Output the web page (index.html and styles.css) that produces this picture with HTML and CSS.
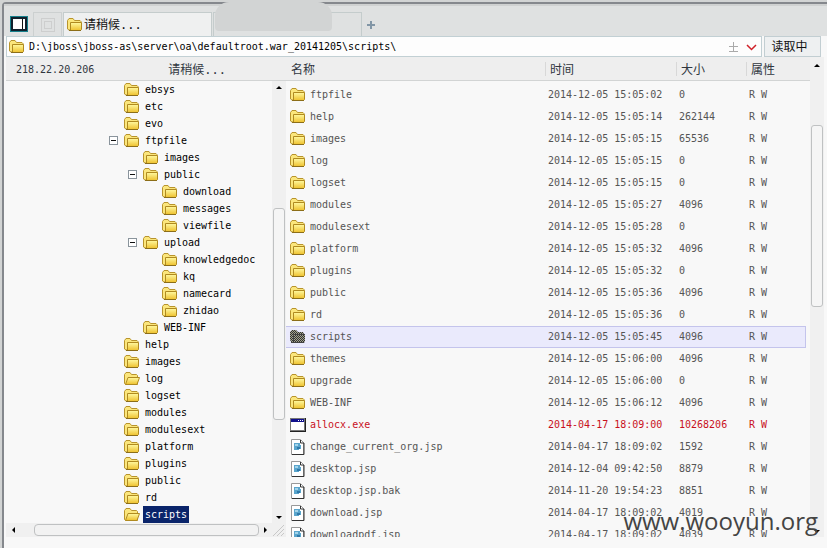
FILE: index.html
```
<!DOCTYPE html>
<html lang="zh-CN">
<head>
<meta charset="utf-8">
<title>文件管理</title>
<link rel="stylesheet" href="styles.css">
</head>
<body>
<svg class="defs" aria-hidden="true">
  <defs>
    <linearGradient id="gold" x1="0" y1="0" x2="0" y2="1"><stop offset="0" stop-color="#fff9a0"/><stop offset="1" stop-color="#eec02c"/></linearGradient>
    <pattern id="dots" width="2" height="2" patternUnits="userSpaceOnUse"><rect width="2" height="2" fill="#a3a38c"/><rect width="1" height="1" fill="#333"/><rect x="1" y="1" width="1" height="1" fill="#333"/></pattern>
    <symbol id="folder" viewBox="0 0 16 14">
      <path d="M.5 11V2.500l1.500-2h4l1.500 2h5.500l1 1V11l-1 1H2z" fill="#fbe67c" stroke="#b8942c"/>
      <path d="M3.500 4.500h11v7l-1 1H3.500z" fill="url(#gold)" stroke="#b08a20"/>
      <path d="M2 12.500h12" stroke="#8c6e18"/>
    </symbol>
    <symbol id="folder-open" viewBox="0 0 16 14">
      <path d="M.5 11.500v-9L2 .5h4l1.500 2h5l1 1v9H1.500z" fill="#fbe67c" stroke="#b8942c"/>
      <path d="M1.500 12.500l2.500-7h11.500l-2.500 7z" fill="url(#gold)" stroke="#b08a20"/>
    </symbol>
    <symbol id="folder-dark" viewBox="0 0 16 14">
      <path d="M0 10V2l2-2h4l2 2h5l1 2h1v7l-1 2H2z" fill="url(#dots)"/>
      <path d="M3.500 11V4.500H15M1 12.500h13" fill="none" stroke="#444"/>
    </symbol>
    <symbol id="exe" viewBox="0 0 16 14">
      <path d="M0 0h16v14H0z" fill="#222"/><path d="M0 0h15v13H0z" fill="#777"/><path d="M1 1h13v11H1z" fill="#fff"/><path d="M1 1h13v3H1z" fill="#10108c"/><path d="M8 2.500h1m1 0h1m1 0h1" stroke="#fff"/>
    </symbol>
    <symbol id="page" viewBox="0 0 16 16">
      <path d="M1.500.5h9l3 3v12h-12z" fill="#fff" stroke="#999"/><path d="M10.500 1v3h3.500v11.500H2" fill="none" stroke="#333"/>
      <path d="M4 4h6v2h1v4H9v1H4z" fill="#5aa5cc"/><path d="M5 5h3v2H5z" fill="#a4d4ea"/><path d="M7 8h3v2H7z" fill="#2f78a8"/>
    </symbol>
  </defs>
</svg>
<div class="window">
  <nav class="tabs">
    <button class="tool" aria-label="面板"><svg width="18" height="16"><path fill="#17808c" d="M0 0h18v16H0z"/><path fill="#10202c" d="M1 1h16v14H1z"/><path fill="#fff" d="M3 3h12v10H3z"/><path d="M12.500 3v10" stroke="#111" stroke-width="1"/></svg></button>
    <button class="tool second" aria-label="选择"><svg width="14" height="14" fill="none" stroke="#bbb" stroke-dasharray="1 1"><path d="M.5.5h13v13H.5zM3.500 3.500h7v7h-7z"/></svg></button>
    <button class="tab active"><svg class="ico"><use href="#folder"/></svg>请稍候...</button>
    <button class="tab hidden-name" aria-label="标签"><span class="smudge"></span></button>
    <button class="plus" aria-label="新建"><svg width="8" height="8"><path d="M4 0v8M0 4h8" stroke="#8296a6" stroke-width="2"/></svg></button>
  </nav>
  <form class="address">
    <label class="field"><svg class="ico"><use href="#folder"/></svg>
      <input aria-label="路径" value="D:\jboss\jboss-as\server\oa\defaultroot.war_20141205\scripts\">
      <svg class="marks" width="32" height="12"><path d="M5.500 1v9M1 5.500h9M1 10.500h9" fill="none" stroke="#aaa"/><path d="M19 4l4.500 4.500L28 4" fill="none" stroke="#d02028" stroke-width="1.500"/></svg>
    </label>
    <button type="button" class="read">读取中</button>
  </form>
  <main class="panes">
    <section class="left">
      <header class="head"><span>218.22.20.206</span><span>请稍候...</span></header>
      <div class="treebox">
        <ul class="tree" id="tree"></ul>
        <div class="vbar"><svg class="arrow"><path d="M3 0l3 3H0z"/></svg><i class="thumb"></i><svg class="arrow"><path d="M0 0h6L3 3z"/></svg></div>
      </div>
      <div class="hbar"><svg width="3" height="6"><path d="M3 0v6L0 3z"/></svg><i class="thumb"></i><svg width="3" height="6"><path d="M0 0v6l3-3z"/></svg><svg class="grip" width="12" height="12"><path d="M1 12L12 1M5 12l7-7M9 12l3-3" stroke="#c8c8c8"/></svg></div>
    </section>
    <section class="right">
      <table>
        <colgroup><col><col class="time"><col class="size"><col class="attr"></colgroup>
        <thead><tr><th>名称</th><th>时间</th><th>大小</th><th>属性</th></tr></thead>
        <tbody id="files"></tbody>
      </table>
    </section>
    <div class="vbar outer"><svg class="arrow"><path d="M3 0l3 3H0z"/></svg><i class="thumb"></i><svg class="arrow"><path d="M0 0h6L3 3z"/></svg></div>
  </main>
</div>
<div class="watermark">www.wooyun.org</div>
<script src="app.js"></script>
</body>
</html>
```
FILE: styles.css
```
* { box-sizing: border-box; }
body { margin: 0; padding: 2px 0 0 2px; height: 100vh; overflow: hidden; background: #d2d4d4; color: #111; font: 10px/16px "DejaVu Sans Mono", "Noto Sans CJK SC", monospace; }
button, input { font: inherit; color: inherit; margin: 0; padding: 0; border: 0; background: none; }
.defs { position: absolute; width: 0; height: 0; }
svg { flex: none; display: block; }
.ico { width: 16px; height: 14px; }
.window { height: 100%; display: flex; flex-direction: column; padding: 0 0 11px 2px; background: #f8f8f8; border: 2px solid #85888d; border-width: 2px 0 0 2px; border-top-left-radius: 4px; }
.tabs { display: flex; align-items: flex-end; flex: none; height: 32px; margin-left: -2px; padding-left: 6px; background: #dfe1e1; border-top: 2px solid #cfd1d1; }
.tool { width: 23px; height: 24px; display: flex; align-items: center; }
.second { width: 29px; justify-content: center; border: 1px solid #ccd0d0; border-bottom: 0; }
.tab { height: 24px; font-size: 12px; display: flex; align-items: center; gap: 1px; border: 1px solid #c4cccc; border-bottom: 0; }
.active { width: 149px; background: #eff0f0; padding-left: 3px; margin-left: 1px; }
.hidden-name { width: 149px; margin-left: 1px; position: relative; }
.smudge { position: absolute; left: 1px; top: -11px; width: 117px; height: 29px; background: #d2d4d4; border-radius: 14px 14px 4px 4px; }
.plus { padding: 0 0 7px 5px; }
.address { display: flex; flex: none; gap: 2px; height: 21px; padding-right: 6px; }
.field { flex: 1; display: flex; align-items: center; gap: 4px; padding: 0 1px 0 2px; background: #fdfdfd; border: 1px solid #c2d0d4; }
.field input { flex: 1; min-width: 0; outline: 0; color: #000; }
.read { width: 57px; padding-right: 6px; border: 1px solid #c2ced2; background: #eef0f1; font-size: 12px; }
.panes { flex: 1; min-height: 0; display: flex; padding-right: 3px; }
.left { width: 280px; flex: none; display: flex; flex-direction: column; }
.head { flex: none; height: 24px; display: flex; align-items: center; padding: 2px 0 0 10px; gap: 74px; background: #eee; border-bottom: 1px solid #d2d4d4; color: #30363e; }
.head span + span { font-size: 12px; }
.treebox { flex: 1; min-height: 0; display: flex; }
.tree { list-style: none; margin: 0; padding: 0; flex: 1; overflow: hidden; }
.tree li { height: 17px; display: flex; align-items: center; }
.l1 { padding-left: 103px; }
.l2 { padding-left: 122px; }
.l3 { padding-left: 141px; }
.box { width: 9px; height: 9px; margin: 0 6px 0 0; border: 1px solid #8a949c; background: #fff; display: flex; align-items: center; justify-content: center; }
.box::before { content: ""; width: 5px; height: 1px; background: #111; }
.box.none { visibility: hidden; }
.tree span { padding: 0 2px; margin-left: 3px; line-height: 17px; color: #000; }
.tree .sel { background: #0a246a; color: #fff; }
.vbar { width: 14px; flex: none; background: #f0f0f0; display: flex; flex-direction: column; align-items: center; padding: 5px 0 4px; }
.arrow { width: 6px; height: 3px; }
.vbar .thumb { width: 12px; height: 212px; margin: 119px 0 auto; border: 1px solid #bfc1c2; border-radius: 3px; background: #f5f5f5; }
.vbar.outer .thumb { height: 182px; margin-top: 58px; }
.vbar.outer { padding-top: 7px; }
.hbar { flex: none; height: 14px; display: flex; align-items: center; background: #f0f0f0; padding: 0 2px 0 6px; }
.hbar .thumb { flex: 1; height: 12px; margin: 0 5px 0 19px; border: 1px solid #bfc1c2; border-radius: 4px; background: #f2f2f2; }
.grip { margin-left: 5px; }
.right { flex: 1; min-width: 0; overflow: hidden; padding-right: 4px; background: linear-gradient(#eee 23px, #d2d4d4 23px, #d2d4d4 24px, #f8f8f8 24px); }
table { width: 100%; table-layout: fixed; border-collapse: separate; border-spacing: 0; }
.time { width: 131px; }
.size { width: 70px; }
.attr { width: 60px; }
th { height: 24px; padding: 2px 5px 0; text-align: left; font-weight: normal; font-size: 12px; color: #30363e; }
th + th { background: linear-gradient(#d8d8d8, #d8d8d8) 0 50% / 1px 14px no-repeat; }
tbody::before { content: ""; display: block; height: 3px; }
td { height: 22px; padding: 0 0 0 3px; color: #555; white-space: nowrap; border: 0 solid #c4c4ec; }
td:first-child { padding-left: 4px; }
td div { display: flex; align-items: center; gap: 4px; }
td .page { height: 16px; }
.on td { background: #eaeafc; border-width: 1px 0; }
.on td:last-child { border-right-width: 1px; }
.hot td { color: #c8101c; }
.watermark { position: absolute; right: 9px; bottom: 9px; font: 24px/36px "Open Sans", sans-serif; color: #444; }
```
FILE: app.js
```
const tree = [
  [1, 'ebsys'], [1, 'etc'], [1, 'evo'], [1, 'ftpfile', 1], [2, 'images'], [2, 'public', 1],
  [3, 'download'], [3, 'messages'], [3, 'viewfile'], [2, 'upload', 1], [3, 'knowledgedoc'],
  [3, 'kq'], [3, 'namecard'], [3, 'zhidao'], [2, 'WEB-INF'], [1, 'help'], [1, 'images'],
  [1, 'log', 0, 'folder-open'], [1, 'logset'], [1, 'modules'], [1, 'modulesext'], [1, 'platform'],
  [1, 'plugins'], [1, 'public'], [1, 'rd'], [1, 'scripts', 0, 'folder-open']
];
document.getElementById('tree').innerHTML = tree.map(([level, name, open, icon], i) =>
  `<li class="l${level}"><i class="box ${open ? '' : 'none'}"></i><svg class="ico"><use href="#${icon || 'folder'}"/></svg><span class="${i === tree.length - 1 ? 'sel' : ''}">${name}</span></li>`).join('');

const files = `ftpfile|2014-12-05 15:05:02|0
help|2014-12-05 15:05:14|262144
images|2014-12-05 15:05:15|65536
log|2014-12-05 15:05:15|0
logset|2014-12-05 15:05:15|0
modules|2014-12-05 15:05:27|4096
modulesext|2014-12-05 15:05:28|0
platform|2014-12-05 15:05:32|4096
plugins|2014-12-05 15:05:32|0
public|2014-12-05 15:05:36|4096
rd|2014-12-05 15:05:36|0
scripts|2014-12-05 15:05:45|4096|folder-dark|on
themes|2014-12-05 15:06:00|4096
upgrade|2014-12-05 15:06:00|0
WEB-INF|2014-12-05 15:06:12|4096
allocx.exe|2014-04-17 18:09:00|10268206|exe|hot
change_current_org.jsp|2014-04-17 18:09:02|1592|page
desktop.jsp|2014-12-04 09:42:50|8879|page
desktop.jsp.bak|2014-11-20 19:54:23|8851|page
download.jsp|2014-04-17 18:09:02|4019|page
downloadpdf.jsp|2014-04-17 18:09:02|4039|page`.split('\n').map(line => line.split('|'));
document.getElementById('files').innerHTML = files.map(([name, time, size, icon = 'folder', state = '']) =>
  `<tr class="${state}"><td><div><svg class="ico ${icon}"><use href="#${icon}"/></svg>${name}</div></td><td>${time}</td><td>${size}</td><td>R W</td></tr>`).join('');
```
